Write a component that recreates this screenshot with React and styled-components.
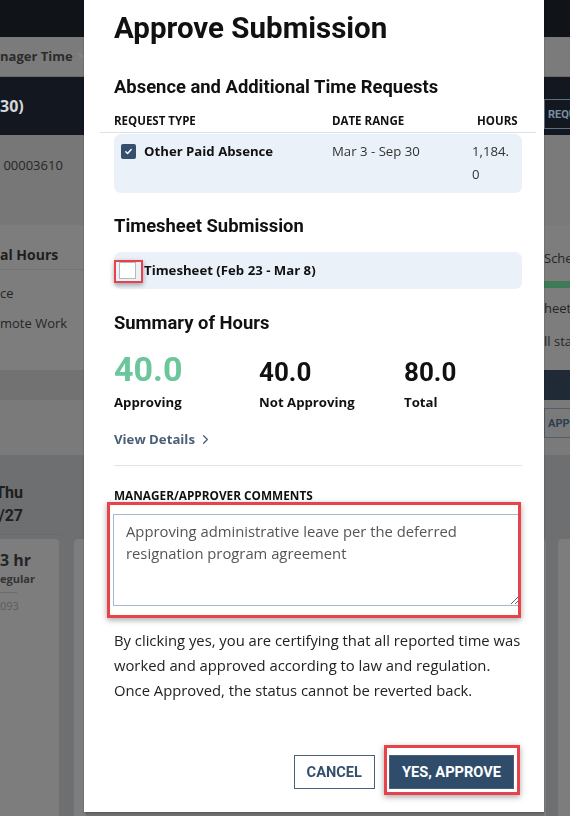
import React, { useEffect, useRef } from 'react'
import styled, { createGlobalStyle } from 'styled-components'
import { ChevronRight } from 'lucide-react'

const NAVY = '#2f4d6b'
const SLATE = '#4a6078'
const RED = '#e8434b'

const Global = createGlobalStyle`
  html, body { margin: 0; padding: 0; }
  body {
    width: 570px;
    height: 816px;
    overflow: hidden;
    background: #6d6f70;
    font-family: "Open Sans", "Liberation Sans", sans-serif;
  }
`

// ---- page behind the dialog (already dimmed) ----

const Page = styled.div`
  display: flex;
  flex-direction: column;
  width: 570px;
  height: 816px;
  overflow: hidden;
`

const Band = styled.div`
  display: flex;
  justify-content: space-between;
  height: ${({ $h }) => $h}px;
  background: ${({ $bg }) => $bg};
  border-bottom: ${({ $line }) => ($line ? `1px solid ${$line}` : 'none')};
  box-sizing: border-box;
`

const Side = styled.div`
  display: flex;
  flex-direction: column;
  width: ${({ $w }) => $w || 84}px;
  padding-top: ${({ $top }) => $top || 0}px;
  background: ${({ $bg }) => $bg || 'transparent'};
  box-sizing: border-box;
  overflow: hidden;
  white-space: nowrap;
`

const BgText = styled.div`
  font-size: ${({ $size }) => $size || 13}px;
  font-weight: ${({ $bold }) => ($bold ? 700 : 400)};
  color: ${({ $color }) => $color || '#232323'};
  line-height: ${({ $lh }) => $lh || 20}px;
`

const Crumb = styled.div`
  display: flex;
  justify-content: space-between;
  align-items: center;
`

const Ghost = styled.div`
  height: 30px;
  margin-top: ${({ $mt }) => $mt || 0}px;
  border: 1px solid ${({ $border }) => $border};
  border-right: none;
  padding-left: 3px;
  font-family: Roboto, sans-serif;
  font-size: 11px;
  font-weight: 700;
  line-height: 30px;
  color: ${({ $color }) => $color};
  box-sizing: border-box;
`

const GreenBar = styled.div`
  height: 7px;
  margin: 13px 0 4px;
  background: #3f7a57;
`

const RuleLine = styled.div`
  height: 1px;
  width: ${({ $w }) => $w || 17}px;
  margin: ${({ $m }) => $m || '4px 0'};
  background: ${({ $c }) => $c || '#6a6a6a'};
`

const WeekArea = styled.div`
  display: flex;
  justify-content: space-between;
  flex: 1;
  background: #6d6f70;
`

const DayCol = styled.div`
  display: flex;
  flex-direction: column;
  width: 84px;
`

const DayHead = styled.div`
  width: 60px;
  height: 80px;
  padding: 26px 37px 0 0;
  box-sizing: border-box;
  border-bottom: 1px solid #686a6b;
  font-family: Roboto, sans-serif;
  font-size: 16px;
  font-weight: 700;
  line-height: 23px;
  color: #1e1e1e;
  text-align: right;
  white-space: nowrap;
  direction: rtl;
  overflow: hidden;
`

const Cards = styled.div`
  display: flex;
  gap: 15px;
  flex: 1;
  padding-top: 4px;
`

const Card = styled.div`
  width: ${({ $w }) => $w}px;
  flex-shrink: 0;
  padding: 11px 0 0;
  box-sizing: border-box;
  background: #7d7d7d;
  border-radius: ${({ $r }) => $r || '0 4px 0 0'};
  overflow: hidden;
  white-space: nowrap;
`

const RightCards = styled.div`
  display: flex;
  gap: 12px;
  width: 26px;
  padding-top: 84px;
  box-sizing: border-box;
`

// ---- dialog ----

const Modal = styled.div`
  position: fixed;
  top: 0;
  left: 84px;
  width: 460px;
  padding: 11px 22px 23px 30px;
  box-sizing: border-box;
  background: #fff;
  color: #111;
  box-shadow: 0 1px 2px rgba(0, 0, 0, 0.25);
`

const Title = styled.h1`
  margin: 0;
  font-family: Roboto, sans-serif;
  font-size: 29.5px;
  line-height: 34px;
  font-weight: 700;
`

const Heading = styled.h2`
  margin: ${({ $mt }) => $mt}px 0 0;
  font-family: Roboto, sans-serif;
  font-size: 18.4px;
  line-height: 24px;
  font-weight: 700;
`

const TableHead = styled.div`
  display: grid;
  grid-template-columns: 218px 145px 1fr;
  margin: 14px -14px 0;
  padding: 0 14px 3px;
  border-bottom: 1px solid #d9e2ec;
  font-size: 11.5px;
  line-height: 16px;
  font-weight: 700;
`

const RowBox = styled.div`
  display: ${({ $grid }) => ($grid ? 'grid' : 'flex')};
  grid-template-columns: 211px 140px 43px;
  align-items: ${({ $grid }) => ($grid ? 'start' : 'center')};
  margin-top: ${({ $mt }) => $mt}px;
  padding: ${({ $pad }) => $pad};
  background: #eaf1f9;
  border-radius: 7px;
  font-size: 13.2px;
  line-height: 23px;
`

const Cell = styled.div`
  display: flex;
  align-items: center;
  gap: 8px;
  font-weight: ${({ $bold }) => ($bold ? 700 : 400)};
  color: ${({ $bold }) => ($bold ? '#111' : '#333')};
  word-break: ${({ $break }) => ($break ? 'break-all' : 'normal')};
`

const Check = styled.span`
  display: inline-flex;
  align-items: center;
  justify-content: center;
  width: 15px;
  height: 15px;
  flex-shrink: 0;
  border-radius: 2px;
  background: #34506e;
`

const EmptyBox = styled.span`
  position: relative;
  display: inline-block;
  width: 15px;
  height: 15px;
  flex-shrink: 0;
  margin-right: 8px;
  border: 1px solid #b9b9b9;
  background: #fff;
  &::after {
    content: '';
    position: absolute;
    left: -6px;
    right: -8px;
    top: -3px;
    bottom: -5px;
    border: 2px solid ${RED};
    box-shadow: 0 2px 5px rgba(0, 0, 0, 0.35);
  }
`

const Stats = styled.div`
  display: grid;
  grid-template-columns: 145px 145px 1fr;
  align-items: baseline;
  margin-top: 14px;
`

const Num = styled.div`
  font-family: Roboto, sans-serif;
  font-weight: 700;
  font-size: ${({ $big }) => ($big ? 34 : 26)}px;
  line-height: 40px;
  color: ${({ $green }) => ($green ? '#6cc69b' : '#111')};
`

const StatLabel = styled.div`
  font-size: 13.2px;
  font-weight: 700;
  line-height: 20px;
`

const DetailsLink = styled.a`
  display: inline-flex;
  align-items: center;
  gap: 3px;
  margin-top: 17px;
  font-size: 13.2px;
  font-weight: 700;
  line-height: 20px;
  color: ${SLATE};
  text-decoration: none;
`

const Divider = styled.hr`
  margin: 16px 0 0;
  border: none;
  border-top: 1px solid #e4e4e4;
`

const FieldLabel = styled.div`
  margin-top: 21px;
  font-size: 11.8px;
  font-weight: 700;
  line-height: 16px;
`

const Highlight = styled.div`
  position: relative;
  &::after {
    content: '';
    position: absolute;
    left: ${({ $l }) => $l}px;
    right: ${({ $r }) => $r}px;
    top: ${({ $t }) => $t}px;
    bottom: ${({ $b }) => $b}px;
    border: 3px solid ${RED};
    box-shadow: 0 2px 6px rgba(0, 0, 0, 0.35);
    pointer-events: none;
  }
`

const CommentWrap = styled(Highlight)`
  margin: 11px 2px 0 -1px;
`

const Comment = styled.textarea`
  display: block;
  width: 100%;
  height: 92px;
  padding: 5px 12px;
  box-sizing: border-box;
  border: 1px solid #a3b9cf;
  outline: none;
  font-family: "Open Sans", sans-serif;
  font-size: 14.8px;
  line-height: 22px;
  color: #555;
  caret-color: #333;
  resize: vertical;
`

const Notice = styled.p`
  margin: 22px 0 0;
  font-size: 14.8px;
  line-height: 25px;
  color: #222;
`

const Actions = styled.div`
  display: flex;
  justify-content: flex-end;
  gap: 14px;
  margin: 52px 8px 0 0;
`

const Button = styled.button`
  height: 34px;
  padding: 0 12px;
  border: 1px solid ${SLATE};
  background: ${({ $primary }) => ($primary ? NAVY : '#fff')};
  color: ${({ $primary }) => ($primary ? '#fff' : '#34506e')};
  font-family: Roboto, sans-serif;
  font-size: 14.6px;
  font-weight: 700;
  cursor: pointer;
`

const CheckMark = () => (
  <svg width="9" height="9" viewBox="0 0 10 10">
    <path d="M2 5.2l2 2 4-4.4" fill="none" stroke="#fff" strokeWidth="1.6" strokeLinecap="round" strokeLinejoin="round" />
  </svg>
)

const Background = () => (
  <Page>
    <Band $h={37} $bg="#101318" />
    <Band $h={40} $bg="#7b7b7b" $line="#6a6a6a">
      <Side $top={9}>
        <Crumb>
          <BgText $bold $color="#2c2c2c">nager Time</BgText>
          <BgText $color="#8f8f8f" $size={11}>&gt;</BgText>
        </Crumb>
      </Side>
    </Band>
    <Band $h={58} $bg="#131820">
      <Side $top={19}>
        <BgText $bold $size={16} $color="#d5d7da">30)</BgText>
      </Side>
      <Side $w={26}>
        <Ghost $mt={22} $border="#5f6f80" $color="#7d90a3">REQU</Ghost>
      </Side>
    </Band>
    <Band $h={90} $bg="#777777">
      <Side $top={20}>
        <BgText $color="#262626">&nbsp;00003610</BgText>
      </Side>
      <Side $w={26} $bg="#7a7a7a" />
    </Band>
    <Band $h={145} $bg="#7d7d7d">
      <Side $top={20}>
        <BgText $bold $size={14} $color="#1e1e1e">al Hours</BgText>
        <RuleLine $w={84} $c="#737373" $m="4px 0 8px" />
        <BgText $lh={30} $color="#262626">ce</BgText>
        <BgText $lh={30} $color="#262626">mote Work</BgText>
      </Side>
      <Side $w={26} $top={23}>
        <BgText $color="#262626">Sche</BgText>
        <GreenBar />
        <BgText $lh={33} $color="#262626">heet</BgText>
        <BgText $lh={33} $color="#262626">ll sta</BgText>
      </Side>
    </Band>
    <Band $h={30} $bg="#727272">
      <Side />
      <Side $w={26} $bg="#1f2a36" />
    </Band>
    <Band $h={55} $bg="#7a7a7a">
      <Side />
      <Side $w={26}>
        <Ghost $mt={8} $border="#4f5f70" $color="#2c3e52">APP</Ghost>
      </Side>
    </Band>
    <WeekArea>
      <DayCol>
        <DayHead>Thu<br />2/27</DayHead>
        <Cards>
          <Card $w={59}>
            <BgText $bold $size={16} $lh={21} $color="#252525">3 hr</BgText>
            <BgText $bold $size={11} $lh={16} $color="#333">egular</BgText>
            <RuleLine $w={17} $c="#6c6c6c" $m="5px 0 4px" />
            <BgText $size={11} $lh={18} $color="#5c5c5c">093</BgText>
          </Card>
          <Card $w={12} $r="4px 0 0 0" />
        </Cards>
      </DayCol>
      <RightCards>
        <Card $w={2} />
        <Card $w={12} $r="4px 0 0 0" />
      </RightCards>
    </WeekArea>
  </Page>
)

export default function App() {
  const comment = useRef(null)

  useEffect(() => {
    const el = comment.current
    if (el) {
      el.focus()
      el.setSelectionRange(el.value.length, el.value.length)
    }
  }, [])

  return (
    <>
      <Global />
      <Background />
      <Modal>
        <Title>Approve Submission</Title>

        <Heading $mt={30}>Absence and Additional Time Requests</Heading>
        <TableHead>
          <span>REQUEST TYPE</span>
          <span>DATE RANGE</span>
          <span>HOURS</span>
        </TableHead>
        <RowBox $grid $mt={1} $pad="6px 7px 7px">
          <Cell $bold>
            <Check><CheckMark /></Check>
            Other Paid Absence
          </Cell>
          <Cell>Mar 3 - Sep 30</Cell>
          <Cell $break>1,184.0</Cell>
        </RowBox>

        <Heading $mt={21}>Timesheet Submission</Heading>
        <RowBox $mt={14} $pad="7px 5px">
          <EmptyBox />
          <Cell $bold>Timesheet (Feb 23 - Mar 8)</Cell>
        </RowBox>

        <Heading $mt={22}>Summary of Hours</Heading>
        <Stats>
          <Num $big $green>40.0</Num>
          <Num>40.0</Num>
          <Num>80.0</Num>
          <StatLabel>Approving</StatLabel>
          <StatLabel>Not Approving</StatLabel>
          <StatLabel>Total</StatLabel>
        </Stats>
        <DetailsLink href="#">
          View Details
          <ChevronRight size={15} strokeWidth={2} />
        </DetailsLink>

        <Divider />

        <FieldLabel>MANAGER/APPROVER COMMENTS</FieldLabel>
        <CommentWrap $l={-6} $r={-1} $t={-12} $b={-12}>
          <Comment
            ref={comment}
            defaultValue="Approving administrative leave per the deferred resignation program agreement"
          />
        </CommentWrap>

        <Notice>
          By clicking yes, you are certifying that all reported time was worked and approved
          according to law and regulation. Once Approved, the status cannot be reverted back.
        </Notice>

        <Actions>
          <Button>CANCEL</Button>
          <Highlight $l={-5} $r={-6} $t={-10} $b={-6}>
            <Button $primary>YES, APPROVE</Button>
          </Highlight>
        </Actions>
      </Modal>
    </>
  )
}
